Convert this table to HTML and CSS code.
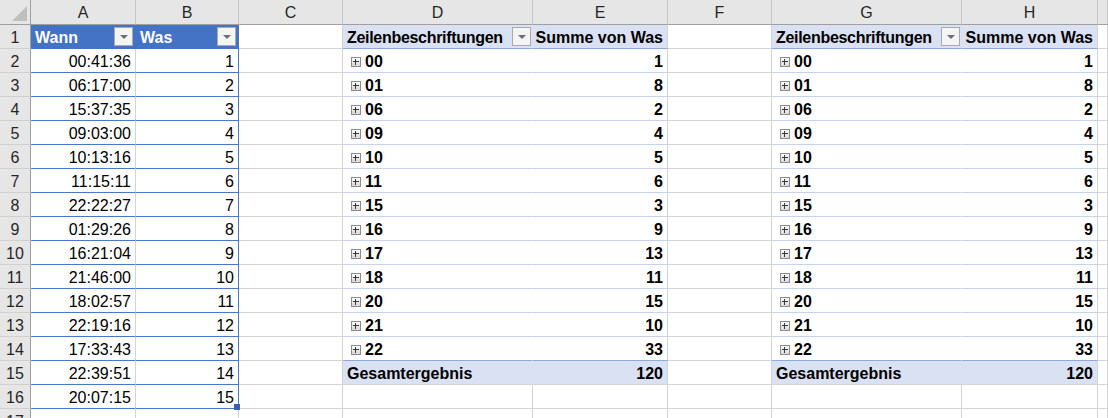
FILE: index.html
```html
<!DOCTYPE html>
<html lang="de">
<head>
<meta charset="utf-8">
<title>Pivot</title>
<link rel="stylesheet" href="styles.css">
</head>
<body>
<div class="sheet">
  <div class="ch corner"></div><div class="ch">A</div><div class="ch">B</div><div class="ch">C</div><div class="ch">D</div><div class="ch">E</div><div class="ch">F</div><div class="ch">G</div><div class="ch">H</div><div class="ch"></div>

  <div class="rh">1</div>
  <div class="th a"><span>Wann</span><span class="fb"></span></div>
  <div class="th b"><span>Was</span><span class="fb"></span></div>
  <div class="c"></div>
  <div class="ph d"><span class="tight">Zeilenbeschriftungen</span><span class="fb"></span></div>
  <div class="ph e">Summe von Was</div>
  <div class="c"></div>
  <div class="ph d"><span class="tight">Zeilenbeschriftungen</span><span class="fb"></span></div>
  <div class="ph e">Summe von Was</div>
  <div class="c"></div>

  <div class="rh">2</div><div class="td a">00:41:36</div><div class="td b">1</div><div class="c"></div>
  <div class="pl"><span class="pb"></span>00</div><div class="pv">1</div><div class="c"></div>
  <div class="pl"><span class="pb"></span>00</div><div class="pv">1</div><div class="c"></div>

  <div class="rh">3</div><div class="td a">06:17:00</div><div class="td b">2</div><div class="c"></div>
  <div class="pl"><span class="pb"></span>01</div><div class="pv">8</div><div class="c"></div>
  <div class="pl"><span class="pb"></span>01</div><div class="pv">8</div><div class="c"></div>

  <div class="rh">4</div><div class="td a">15:37:35</div><div class="td b">3</div><div class="c"></div>
  <div class="pl"><span class="pb"></span>06</div><div class="pv">2</div><div class="c"></div>
  <div class="pl"><span class="pb"></span>06</div><div class="pv">2</div><div class="c"></div>

  <div class="rh">5</div><div class="td a">09:03:00</div><div class="td b">4</div><div class="c"></div>
  <div class="pl"><span class="pb"></span>09</div><div class="pv">4</div><div class="c"></div>
  <div class="pl"><span class="pb"></span>09</div><div class="pv">4</div><div class="c"></div>

  <div class="rh">6</div><div class="td a">10:13:16</div><div class="td b">5</div><div class="c"></div>
  <div class="pl"><span class="pb"></span>10</div><div class="pv">5</div><div class="c"></div>
  <div class="pl"><span class="pb"></span>10</div><div class="pv">5</div><div class="c"></div>

  <div class="rh">7</div><div class="td a">11:15:11</div><div class="td b">6</div><div class="c"></div>
  <div class="pl"><span class="pb"></span>11</div><div class="pv">6</div><div class="c"></div>
  <div class="pl"><span class="pb"></span>11</div><div class="pv">6</div><div class="c"></div>

  <div class="rh">8</div><div class="td a">22:22:27</div><div class="td b">7</div><div class="c"></div>
  <div class="pl"><span class="pb"></span>15</div><div class="pv">3</div><div class="c"></div>
  <div class="pl"><span class="pb"></span>15</div><div class="pv">3</div><div class="c"></div>

  <div class="rh">9</div><div class="td a">01:29:26</div><div class="td b">8</div><div class="c"></div>
  <div class="pl"><span class="pb"></span>16</div><div class="pv">9</div><div class="c"></div>
  <div class="pl"><span class="pb"></span>16</div><div class="pv">9</div><div class="c"></div>

  <div class="rh">10</div><div class="td a">16:21:04</div><div class="td b">9</div><div class="c"></div>
  <div class="pl"><span class="pb"></span>17</div><div class="pv">13</div><div class="c"></div>
  <div class="pl"><span class="pb"></span>17</div><div class="pv">13</div><div class="c"></div>

  <div class="rh">11</div><div class="td a">21:46:00</div><div class="td b">10</div><div class="c"></div>
  <div class="pl"><span class="pb"></span>18</div><div class="pv">11</div><div class="c"></div>
  <div class="pl"><span class="pb"></span>18</div><div class="pv">11</div><div class="c"></div>

  <div class="rh">12</div><div class="td a">18:02:57</div><div class="td b">11</div><div class="c"></div>
  <div class="pl"><span class="pb"></span>20</div><div class="pv">15</div><div class="c"></div>
  <div class="pl"><span class="pb"></span>20</div><div class="pv">15</div><div class="c"></div>

  <div class="rh">13</div><div class="td a">22:19:16</div><div class="td b">12</div><div class="c"></div>
  <div class="pl"><span class="pb"></span>21</div><div class="pv">10</div><div class="c"></div>
  <div class="pl"><span class="pb"></span>21</div><div class="pv">10</div><div class="c"></div>

  <div class="rh">14</div><div class="td a">17:33:43</div><div class="td b">13</div><div class="c"></div>
  <div class="pl last"><span class="pb"></span>22</div><div class="pv last">33</div><div class="c"></div>
  <div class="pl last"><span class="pb"></span>22</div><div class="pv last">33</div><div class="c"></div>

  <div class="rh">15</div><div class="td a">22:39:51</div><div class="td b">14</div><div class="c"></div>
  <div class="pt d">Gesamtergebnis</div><div class="pt e">120</div><div class="c"></div>
  <div class="pt d">Gesamtergebnis</div><div class="pt e">120</div><div class="c"></div>

  <div class="rh">16</div><div class="td a">20:07:15</div><div class="td b end">15<span class="handle"></span></div><div class="c"></div>
  <div class="c"></div><div class="c"></div><div class="c"></div><div class="c"></div><div class="c"></div><div class="c"></div>

  <div class="rh">17</div><div class="c"></div><div class="c"></div><div class="c"></div><div class="c"></div><div class="c"></div><div class="c"></div><div class="c"></div><div class="c"></div><div class="c"></div>
</div>
</body>
</html>
```
FILE: styles.css
```css
html, body {
  margin: 0;
  padding: 0;
  background: #ffffff;
  overflow: hidden;
}

.sheet {
  display: grid;
  grid-template-columns: 31px 105px 103px 104px 190px 135px 104px 190px 136px 1fr;
  grid-template-rows: 25px repeat(17, 24px);
  width: 1108px;
  height: 418px;
  overflow: hidden;
  font-family: "Liberation Sans", Arial, sans-serif;
  font-size: 16px;
  color: #000;
}

.sheet > div {
  box-sizing: border-box;
  border-right: 1px solid #d4d4d4;
  border-bottom: 1px solid #d4d4d4;
  padding-top: 3px;
  line-height: 20px;
  white-space: nowrap;
  overflow: hidden;
}

/* column headers */
.sheet > .ch {
  background: #e6e6e6;
  border-right-color: #c6c6c6;
  border-bottom-color: #9f9f9f;
  text-align: center;
  padding-top: 2px;
  line-height: 22px;
  color: #262626;
}

.sheet > .corner {
  position: relative;
  border-right-color: #9f9f9f;
}

.corner::after {
  content: "";
  position: absolute;
  right: 3px;
  bottom: 3px;
  width: 0;
  height: 0;
  border-left: 15px solid transparent;
  border-bottom: 15px solid #bfbfbf;
}

/* row headers */
.sheet > .rh {
  background: #e6e6e6;
  border-right-color: #9f9f9f;
  border-bottom-color: #d0d0d0;
  text-align: center;
  color: #262626;
}

/* excel table */
.sheet > .th {
  background: #4472c4;
  color: #fff;
  font-weight: bold;
  border-right-color: #4472c4;
  border-bottom-color: #4472c4;
  display: flex;
  justify-content: space-between;
  padding: 3px 2px 0 4px;
}

.fb {
  position: relative;
  box-sizing: border-box;
  width: 19px;
  height: 19px;
  margin-top: -1px;
  background: #f4f4f4;
  border: 1px solid #a9a9a9;
  flex: none;
}

.fb::after {
  content: "";
  position: absolute;
  left: 5px;
  top: 7px;
  width: 0;
  height: 0;
  border-left: 4px solid transparent;
  border-right: 4px solid transparent;
  border-top: 4px solid #6e6e6e;
}

.sheet > .td {
  text-align: right;
  padding-right: 4px;
  border-bottom-color: #4a78c8;
}

.sheet > .td.a {
  border-right-color: #d4d4d4;
}

.sheet > .td.b {
  border-right-color: #4a78c8;
}

.sheet > .end {
  position: relative;
  overflow: visible;
}

.handle {
  position: absolute;
  right: -2px;
  bottom: -2px;
  width: 6px;
  height: 6px;
  background: #3c5fb4;
}

/* pivot tables */
.sheet > .ph {
  background: #d9e1f2;
  font-weight: bold;
  border-bottom-color: #8ea9db;
}

.sheet > .ph.d {
  display: flex;
  justify-content: space-between;
  padding: 3px 1px 0 4px;
  border-right-color: #d9e1f2;
}

.tight {
  letter-spacing: -0.3px;
}

.sheet > .ph.e {
  text-align: right;
  padding-right: 4px;
  border-right-color: #d4d4d4;
}

.sheet > .pl {
  font-weight: bold;
  padding-left: 8px;
  border-right-color: #ffffff;
  border-bottom-color: #c5d3ec;
}

.sheet > .pv {
  font-weight: bold;
  text-align: right;
  padding-right: 4px;
  border-bottom-color: #c5d3ec;
}

.sheet > .last {
  border-bottom-color: #8ea9db;
}

.pb {
  position: relative;
  display: inline-block;
  box-sizing: border-box;
  width: 10px;
  height: 10px;
  margin-right: 4px;
  border: 1px solid #8c8c8c;
  background: linear-gradient(#fbfbfb, #d8d8d8);
  vertical-align: 0;
}

.pb::before {
  content: "";
  position: absolute;
  left: 1px;
  top: 3px;
  width: 6px;
  height: 1px;
  background: #3a3a3a;
}

.pb::after {
  content: "";
  position: absolute;
  left: 3px;
  top: 1px;
  width: 1px;
  height: 6px;
  background: #3a3a3a;
}

.sheet > .pt {
  background: #d9e1f2;
  font-weight: bold;
}

.sheet > .pt.d {
  padding-left: 4px;
  border-right-color: #d9e1f2;
}

.sheet > .pt.e {
  text-align: right;
  padding-right: 4px;
}
```
